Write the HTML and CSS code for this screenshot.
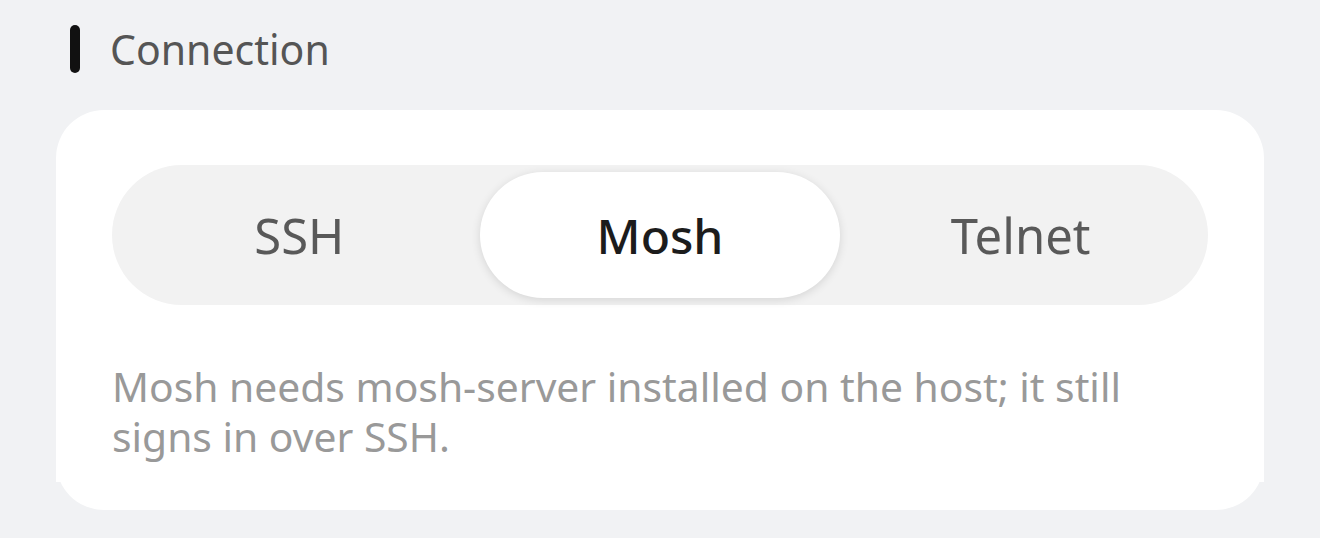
FILE: index.html
```html
<!DOCTYPE html>
<html lang="en">
<head>
<meta charset="utf-8">
<title>Connection</title>
<link rel="stylesheet" href="styles.css">
</head>
<body>
<div class="page">
  <div class="section-header">
    <span class="bar"></span>
    <h2 class="title">Connection</h2>
  </div>
  <div class="card">
    <div class="card-body">
      <div class="segmented">
        <div class="seg">SSH</div>
        <div class="seg active">Mosh</div>
        <div class="seg">Telnet</div>
      </div>
      <p class="hint">Mosh needs mosh-server installed on the host; it still signs in over SSH.</p>
    </div>
  </div>
</div>
</body>
</html>
```
FILE: styles.css
```css
* { box-sizing: border-box; }
html, body { margin: 0; padding: 0; }
body {
  background: #f1f2f4;
  font-family: "Noto Sans", "Liberation Sans", sans-serif;
  width: 1320px;
  height: 538px;
  overflow: hidden;
}
.page {
  padding: 25px 0 0 56px;
}
.section-header {
  display: flex;
  align-items: center;
  gap: 30px;
  padding-left: 14px;
  height: 48px;
}
.bar {
  width: 10px;
  height: 48px;
  border-radius: 5px;
  background: #111;
}
.title {
  margin: 0;
  font-size: 41px;
  font-weight: 400;
  color: #555;
  line-height: 48px;
}
.card {
  margin-top: 37px;
  width: 1208px;
  background: #fff;
  border-radius: 48px;
  padding: 55px 0 28px;
}
.card-body {
  background: #fff;
  padding: 0 56px 21px;
}
.segmented {
  display: grid;
  grid-template-columns: 1fr 1fr 1fr;
  height: 140px;
  padding: 7px;
  background: #f2f2f2;
  border-radius: 70px;
}
.seg {
  display: flex;
  align-items: center;
  justify-content: center;
  font-size: 49px;
  color: #595959;
  border-radius: 63px;
}
.seg.active {
  background: #fff;
  color: #1c1c1c;
  font-weight: 500;
  font-size: 48px;
  box-shadow: 0 2px 10px rgba(0,0,0,0.12);
}
.hint {
  margin: 56px 0 0;
  font-size: 40.8px;
  line-height: 50px;
  color: #999;
}
```
